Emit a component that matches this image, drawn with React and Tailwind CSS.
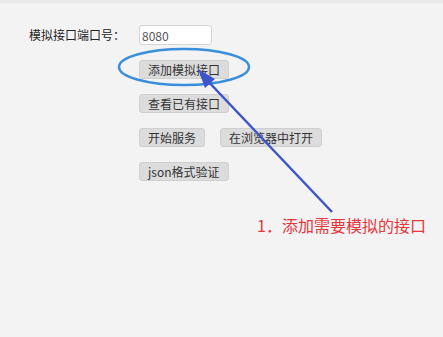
import React from 'react'

const font = { fontFamily: '"Noto Sans CJK SC", "Liberation Sans", sans-serif' }

function Btn({ children }){
  return (
    <button className="h-[19px] px-[8px] rounded-[3px] bg-[#dcdcdc] border border-[#cfcfcf] text-[12px] leading-none text-[#333] whitespace-nowrap">
      {children}
    </button>
  )
}

export default function App(){
  return (
    <div className="relative w-[443px] h-[337px] bg-[#f3f3f3] overflow-hidden" style={font}>
      <div className="h-[3px] bg-[#e9e9e9]" />
      <div className="pt-[22px] pl-[29px]">
        <div className="flex items-center h-[20px]">
          <span className="w-[110px] text-[12px] text-[#222]">模拟接口端口号：</span>
          <input
            defaultValue="8080"
            className="w-[73px] h-[20px] px-[2px] rounded-[3px] bg-white border border-[#d4d4d4] text-[12px] text-[#555] outline-none"
            style={font}
          />
        </div>
        <div className="flex flex-col items-start gap-[15px] mt-[15px] ml-[110px]">
          <Btn>添加模拟接口</Btn>
          <Btn>查看已有接口</Btn>
          <div className="flex gap-[15px]">
            <Btn>开始服务</Btn>
            <Btn>在浏览器中打开</Btn>
          </div>
          <Btn>json格式验证</Btn>
        </div>
      </div>

      <svg className="absolute inset-0 pointer-events-none" width="443" height="337">
        <ellipse cx="184" cy="67" rx="65" ry="18" fill="none" stroke="#3a8fdc" strokeWidth="2.5" />
        <line x1="332" y1="212" x2="204" y2="77" stroke="#3c55c8" strokeWidth="2.5" />
        <polygon points="198,69 215,79 205,88" fill="#3c55c8" />
      </svg>

      <div className="absolute left-[257px] top-[213px] text-[16px] text-[#e5363c] whitespace-nowrap">1．添加需要模拟的接口</div>
    </div>
  )
}
